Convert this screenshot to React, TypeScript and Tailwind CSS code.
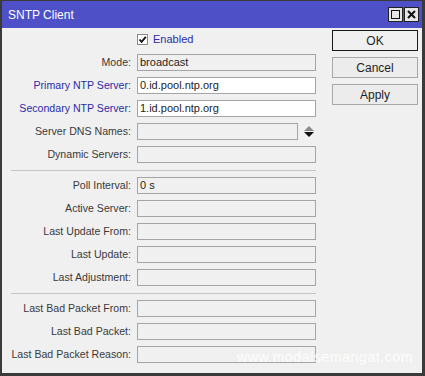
import React from "react";

const font = { fontFamily: '"Liberation Sans", Arial, sans-serif' };

function Field({
  label,
  value = "",
  blue = false,
  white = false,
  narrow = false,
  spinner = false,
}: {
  label: string;
  value?: string;
  blue?: boolean;
  white?: boolean;
  narrow?: boolean;
  spinner?: boolean;
}) {
  return (
    <div className="flex h-[17px] items-center">
      <div
        className={`w-[130px] shrink-0 pr-[1px] text-right text-[10.6px] leading-none ${
          blue ? "text-[#2b2ba6]" : "text-[#3a3a3a]"
        }`}
      >
        {label}
      </div>
      <div className="ml-[5px] flex items-center">
        <div
          className={`flex h-[17px] items-center border border-[#a5a5a5] pl-[2px] text-[11px] leading-none text-[#1e1e1e] ${
            narrow ? "w-[161px]" : "w-[179px]"
          } ${white ? "bg-white" : "bg-[#f0f0f0]"}`}
        >
          {value}
        </div>
        {spinner && (
          <svg width="10" height="12" viewBox="0 0 10 12" className="ml-[6px]">
            <polygon points="5,0 10,5 0,5" fill="#8a8a8a" />
            <polygon points="0,6 10,6 5,11" fill="#111111" />
          </svg>
        )}
      </div>
    </div>
  );
}

function Sep() {
  return <div className="ml-[9px] mt-px h-px w-[305px] bg-[#c4c4c4]" />;
}

function Btn({ label, focus = false }: { label: string; focus?: boolean }) {
  return (
    <div
      className={`flex h-[21px] w-[86px] items-center justify-center border text-[12px] leading-none text-[#1e1e1e] ${
        focus ? "border-[#1a1a1a] bg-[#f0f0f0]" : "border-[#a8a8a8] bg-[#ececec]"
      }`}
    >
      {label}
    </div>
  );
}

export default function App() {
  return (
    <div
      style={font}
      className="relative flex h-[376px] w-[425px] flex-col border-b-[3px] border-l-2 border-r-[3px] border-t border-[#3a3a3a] bg-[#f0f0f0]"
    >
      {/* Title bar */}
      <div className="flex h-[27px] shrink-0 items-center justify-between bg-[#4e50c8] pl-[6px] pr-[3px]">
        <span className="text-[12px] text-white">SNTP Client</span>
        <div className="flex gap-[1px]">
          <div className="flex h-[15px] w-[15px] items-center justify-center border border-[#222] bg-[#e6e6e6]">
            <div className="h-[9px] w-[9px] border-[1.5px] border-[#111]" />
          </div>
          <div className="flex h-[15px] w-[15px] items-center justify-center border border-[#222] bg-[#e6e6e6]">
            <svg width="9" height="9" viewBox="0 0 9 9">
              <path d="M1 1 L8 8 M8 1 L1 8" stroke="#111" strokeWidth="2" />
            </svg>
          </div>
        </div>
      </div>

      {/* Body */}
      <div className="flex flex-1">
        {/* Form */}
        <div className="flex w-[330px] flex-col gap-[6px] pt-[3px]">
          <div className="flex h-[17px] items-center">
            <div className="w-[135px] shrink-0" />
            <div className="flex h-[11px] w-[11px] items-center justify-center border border-[#8a8a8a] bg-white">
              <svg width="9" height="9" viewBox="0 0 9 9">
                <path d="M1.5 4.5 L3.6 6.8 L7.8 1.8" stroke="#111" strokeWidth="1.8" fill="none" />
              </svg>
            </div>
            <span className="ml-[5px] text-[11px] leading-none text-[#2b2ba6]">Enabled</span>
          </div>
          <Field label="Mode:" value="broadcast" />
          <Field label="Primary NTP Server:" value="0.id.pool.ntp.org" blue white />
          <Field label="Secondary NTP Server:" value="1.id.pool.ntp.org" blue white />
          <Field label="Server DNS Names:" narrow spinner />
          <Field label="Dynamic Servers:" />
          <Sep />
          <Field label="Poll Interval:" value="0 s" />
          <Field label="Active Server:" />
          <Field label="Last Update From:" />
          <Field label="Last Update:" />
          <Field label="Last Adjustment:" />
          <Sep />
          <Field label="Last Bad Packet From:" />
          <Field label="Last Bad Packet:" />
          <Field label="Last Bad Packet Reason:" />
        </div>

        {/* Buttons */}
        <div className="flex flex-col gap-[6px] pt-[2px]">
          <Btn label="OK" focus />
          <Btn label="Cancel" />
          <Btn label="Apply" />
        </div>
      </div>

      <div className="pointer-events-none absolute bottom-[5px] right-[9px] text-[14px] tracking-[0.6px] text-white/80">
        www.modalsemangat.com
      </div>
    </div>
  );
}
